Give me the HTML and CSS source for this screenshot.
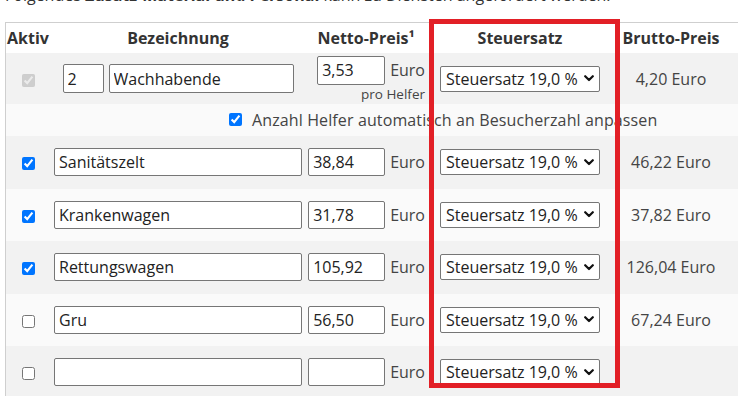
FILE: index.html
```html
<!DOCTYPE html>
<html lang="de">
<head>
<meta charset="utf-8">
<title>Zusatz-Material und Personal</title>
<link rel="stylesheet" href="styles.css">
</head>
<body>
<p class="intro">Folgendes <strong>Zusatz-Material und Personal</strong> kann zu Diensten angefordert werden.</p>
<table class="extras">
  <colgroup>
    <col class="col-active">
    <col class="col-name">
    <col class="col-net">
    <col class="col-tax">
    <col class="col-gross">
  </colgroup>
  <thead>
    <tr>
      <th>Aktiv</th>
      <th>Bezeichnung</th>
      <th class="th-net">Netto-Preis¹</th>
      <th>Steuersatz</th>
      <th class="cell-gross">Brutto-Preis</th>
    </tr>
  </thead>
  <tbody>
    <tr class="row-gray row-staff">
      <td class="cell-active"><input type="checkbox" checked disabled></td>
      <td class="cell-name">
        <div class="name-group">
          <input type="text" class="field field-count" value="2">
          <input type="text" class="field field-staff" value="Wachhabende">
        </div>
      </td>
      <td class="cell-net">
        <div class="price"><input type="text" class="field field-net-staff" value="3,53"><span>Euro</span></div>
        <div class="per-helper">pro Helfer</div>
      </td>
      <td class="cell-tax"><select class="tax"><option>Steuersatz 19,0 %</option></select></td>
      <td class="cell-gross">4,20 Euro</td>
    </tr>
    <tr class="row-light row-auto">
      <td colspan="5" class="cell-auto">
        <label class="auto-label"><input type="checkbox" checked> Anzahl Helfer automatisch an Besucherzahl anpassen</label>
      </td>
    </tr>
    <tr class="row-gray row-item">
      <td class="cell-active"><input type="checkbox" checked></td>
      <td class="cell-name"><input type="text" class="field field-name" value="Sanitätszelt"></td>
      <td class="cell-net"><div class="price"><input type="text" class="field field-net" value="38,84"><span>Euro</span></div></td>
      <td class="cell-tax"><select class="tax"><option>Steuersatz 19,0 %</option></select></td>
      <td class="cell-gross">46,22 Euro</td>
    </tr>
    <tr class="row-light row-item">
      <td class="cell-active"><input type="checkbox" checked></td>
      <td class="cell-name"><input type="text" class="field field-name" value="Krankenwagen"></td>
      <td class="cell-net"><div class="price"><input type="text" class="field field-net" value="31,78"><span>Euro</span></div></td>
      <td class="cell-tax"><select class="tax"><option>Steuersatz 19,0 %</option></select></td>
      <td class="cell-gross">37,82 Euro</td>
    </tr>
    <tr class="row-gray row-item">
      <td class="cell-active"><input type="checkbox" checked></td>
      <td class="cell-name"><input type="text" class="field field-name" value="Rettungswagen"></td>
      <td class="cell-net"><div class="price"><input type="text" class="field field-net" value="105,92"><span>Euro</span></div></td>
      <td class="cell-tax"><select class="tax"><option>Steuersatz 19,0 %</option></select></td>
      <td class="cell-gross">126,04 Euro</td>
    </tr>
    <tr class="row-light row-item">
      <td class="cell-active"><input type="checkbox"></td>
      <td class="cell-name"><input type="text" class="field field-name" value="Gru"></td>
      <td class="cell-net"><div class="price"><input type="text" class="field field-net" value="56,50"><span>Euro</span></div></td>
      <td class="cell-tax"><select class="tax"><option>Steuersatz 19,0 %</option></select></td>
      <td class="cell-gross">67,24 Euro</td>
    </tr>
    <tr class="row-gray row-item">
      <td class="cell-active"><input type="checkbox"></td>
      <td class="cell-name"><input type="text" class="field field-name" value=""></td>
      <td class="cell-net"><div class="price"><input type="text" class="field field-net" value=""><span>Euro</span></div></td>
      <td class="cell-tax"><select class="tax"><option>Steuersatz 19,0 %</option></select></td>
      <td class="cell-gross"></td>
    </tr>
  </tbody>
</table>
<div class="highlight"></div>
</body>
</html>
```
FILE: styles.css
```css
html, body {
  margin: 0;
  padding: 0;
  overflow: hidden;
  background: #fff;
}

body {
  font-family: "Open Sans", "Liberation Sans", sans-serif;
  font-size: 16px;
  color: #444;
  width: 738px;
  height: 396px;
  position: relative;
}

.intro {
  margin: -17px 0 0 5px;
  line-height: 24px;
  color: #333;
  white-space: nowrap;
}

.intro strong {
  font-weight: 700;
}

.extras {
  margin: 15px 0 0 5px;
  border-collapse: separate;
  border-spacing: 0;
  border-top: 1px solid #cfcfcf;
  border-left: 1px solid #cfcfcf;
  table-layout: fixed;
  width: 737px;
}

.col-active { width: 44px; }
.col-name { width: 256px; }
.col-net { width: 126px; }
.col-tax { width: 176px; }
.col-gross { width: 134px; }

.extras th {
  height: 30px;
  padding: 0;
  font-weight: 700;
  color: #333;
  text-align: center;
  vertical-align: middle;
  background: #fff;
  white-space: nowrap;
}

.extras th.th-net {
  padding-right: 6px;
}

.extras td {
  padding: 0;
  vertical-align: middle;
  text-align: center;
  white-space: nowrap;
}

.row-gray td { background: #f2f2f2; }
.row-light td { background: #fafafa; }

.row-staff td { height: 51px; }
.row-auto td { height: 32px; }
.row-item td { height: 52.5px; }

.cell-active input {
  margin: 0;
  width: 13px;
  height: 13px;
  vertical-align: middle;
}

.name-group {
  display: flex;
  justify-content: center;
  gap: 5px;
}

.field {
  box-sizing: border-box;
  height: 28px;
  border: 1px solid #767676;
  border-radius: 2px;
  padding: 0 4px;
  font-family: "Open Sans", "Liberation Sans", sans-serif;
  font-size: 16px;
  color: #222;
  background: #fff;
  vertical-align: middle;
  margin: 0;
}

.field-count { width: 41px; height: 29px; }
.field-staff { width: 185px; height: 29px; }
.field-name { width: 248px; }
.field-net { width: 77px; }
.field-net-staff { width: 68px; height: 29px; }

.cell-net {
  padding-right: 7px !important;
}

.price {
  display: flex;
  justify-content: flex-end;
  align-items: center;
  gap: 5px;
  line-height: 24px;
}

.per-helper {
  text-align: right;
  font-size: 13.5px;
  line-height: 16px;
  margin-top: 1px;
}

.tax {
  appearance: none;
  -webkit-appearance: none;
  box-sizing: border-box;
  width: 160px;
  height: 26px;
  margin: 0;
  padding: 0 16px 0 5px;
  font-family: "Open Sans", "Liberation Sans", sans-serif;
  font-size: 16px;
  color: #222;
  border: 1px solid #767676;
  border-radius: 2px;
  background-color: #fff;
  background-image: url("data:image/svg+xml,%3Csvg xmlns='http://www.w3.org/2000/svg' width='10' height='7' viewBox='0 0 10 7'%3E%3Cpath d='M1.2 1.2 5 5 8.8 1.2' fill='none' stroke='%23111' stroke-width='2.2' stroke-linecap='round' stroke-linejoin='round'/%3E%3C/svg%3E");
  background-repeat: no-repeat;
  background-position: right 5px center;
  background-size: 10px 7px;
  vertical-align: middle;
}

.cell-gross {
  padding-right: 8px !important;
}

.cell-auto {
  text-align: left !important;
  padding-left: 223px !important;
}

.auto-label {
  display: inline-flex;
  align-items: center;
  gap: 10px;
  letter-spacing: 0.12px;
}

.auto-label input {
  margin: 0;
  width: 13px;
  height: 13px;
}

.highlight {
  position: absolute;
  left: 429px;
  top: 19px;
  width: 191px;
  height: 369px;
  box-sizing: border-box;
  border: 5px solid #e21f26;
  pointer-events: none;
}
```
